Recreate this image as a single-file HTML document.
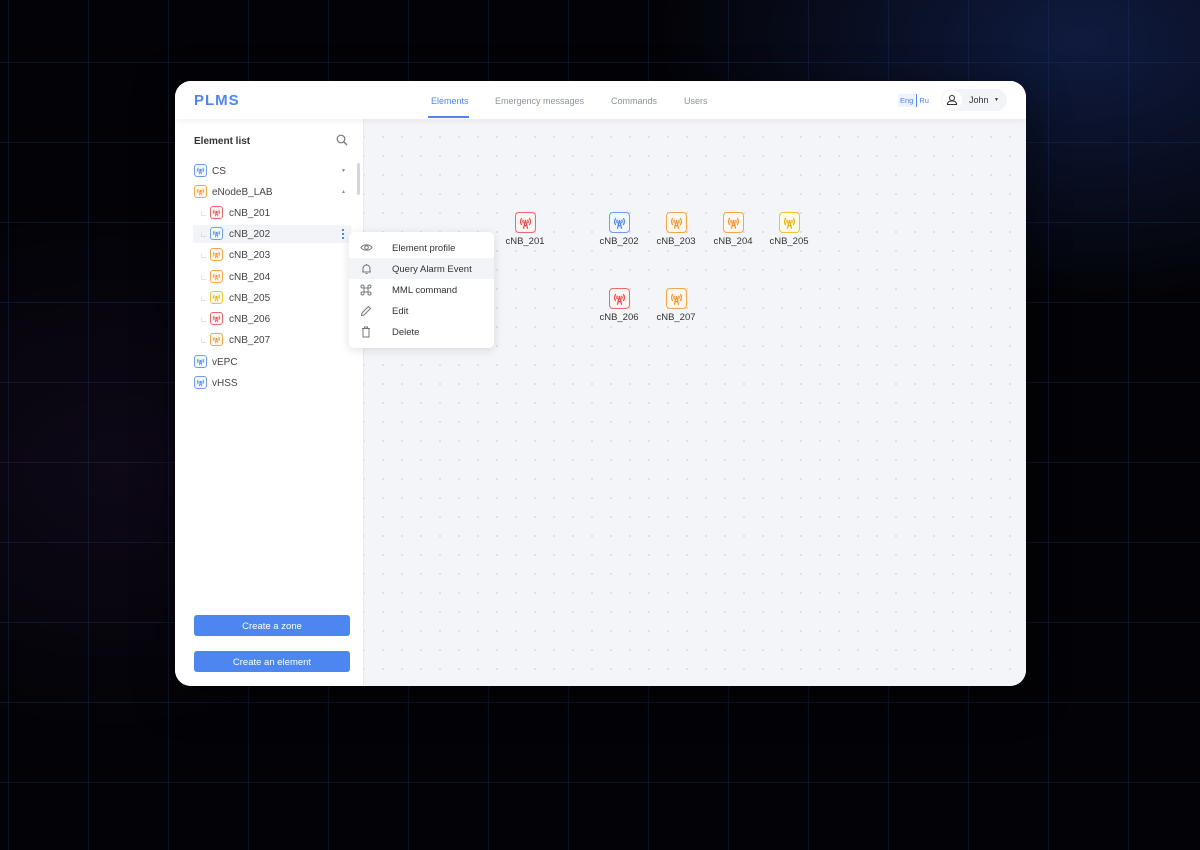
<!DOCTYPE html>
<html><head><meta charset="utf-8"><style>
*{box-sizing:border-box;margin:0;padding:0}
body{width:1200px;height:850px;overflow:hidden;font-family:"Liberation Sans",sans-serif;background:#030307;position:relative}
.bg{position:absolute;inset:0;background:
radial-gradient(ellipse 420px 260px at 1080px 40px,rgba(30,55,130,.45),transparent),
radial-gradient(ellipse 350px 260px at 120px 470px,rgba(40,20,60,.3),transparent);}
.grid{position:absolute;inset:0;background-image:linear-gradient(90deg,rgba(35,60,130,.28) 1px,transparent 1px),linear-gradient(rgba(35,60,130,.28) 1px,transparent 1px);background-size:80px 80px;background-position:8px 62px;}
.win{position:absolute;left:175px;top:81px;width:851px;height:605px;background:#fff;border-radius:16px;overflow:hidden;box-shadow:0 10px 40px rgba(0,0,0,.5)}
.top{position:absolute;left:0;top:0;width:100%;height:38px;background:#fff;box-shadow:0 2px 6px rgba(0,0,0,.06);z-index:3}
.logo{position:absolute;left:19px;top:11px;font-weight:bold;font-size:15px;color:#4d86f0;letter-spacing:1px}
.nav{position:absolute;top:15px;font-size:9px;color:#8d929c}
.nav.a{color:#4d86f0}
.ul{position:absolute;left:253px;top:35px;width:41px;height:2px;background:#4d86f0}
.lang{position:absolute;left:723px;top:13px;font-size:7.5px;color:#4d86f0}
.lang span{display:inline-block;padding:2px 2px;background:#eef3fd}
.user{position:absolute;left:766px;top:8px;width:66px;height:22px;background:#f3f4f7;border-radius:11px;font-size:9px;color:#333}
.user .c{position:absolute;left:1px;top:1px;width:20px;height:20px;border-radius:10px;background:#fff}
.side{position:absolute;left:0;top:38px;width:189px;height:567px;background:#fff;border-right:1px solid #e8eaee}
.canvas{position:absolute;left:189px;top:38px;right:0;bottom:0;background-color:#f4f5f9;background-image:radial-gradient(circle,#d3d6dd 0.7px,transparent 1.1px);background-size:19px 19px;background-position:9.5px 8.5px}
.h{position:absolute;left:19px;font-size:10px;font-weight:bold;color:#333}
.row{position:absolute;height:18px;font-size:10px;color:#444;line-height:18px}
.ic{position:absolute;width:13px;height:13px;border:1px solid;border-radius:3px}
.ic svg{position:absolute;left:1px;top:1px;width:9px;height:9px}
.b{border-color:#6f9df1;color:#4d86f0;background:#f3f7ff}.o{border-color:#f5a54a;color:#f29330;background:#fff8ef}.r{border-color:#ea6a6a;color:#e24c4c;background:#fff4f4}.y{border-color:#efc230;color:#e3b20c;background:#fffbe9}
.btn{position:absolute;left:19px;width:156px;height:21px;background:#4d86f0;border-radius:3px;color:#fff;font-size:9.5px;text-align:center;line-height:23px}
.menu{position:absolute;left:349px;top:232px;width:145px;height:116px;background:#fff;border-radius:5px;box-shadow:0 2px 10px rgba(0,0,0,.12);z-index:5}
.mi{position:absolute;left:0;width:100%;height:21px;font-size:9.5px;color:#333;line-height:23px}
.mi span{position:absolute;left:43px}
.mi svg{position:absolute;left:11px;top:5px}
.node{position:absolute;text-align:center;font-size:9.5px;color:#333;width:50px;line-height:12px}
.node .ic{position:relative;display:block;margin:0 auto 3px;width:21px;height:21px;border-radius:4px;left:0}
.node .ic svg{left:2px;top:2px;width:15px;height:15px}
</style></head><body>
<svg width="0" height="0" style="position:absolute"><defs><symbol id="ant" viewBox="0 0 12 12"><path d="M3 2.5a4.5 4.5 0 0 0 0 5.5M9 2.5a4.5 4.5 0 0 1 0 5.5M4.4 3.8a2.3 2.3 0 0 0 0 2.8M7.6 3.8a2.3 2.3 0 0 1 0 2.8M6 4L4.3 11M6 4L7.7 11M4.9 8.5h2.2" fill="none" stroke="currentColor" stroke-width="1"/></symbol></defs></svg>
<div class="bg"></div><div class="grid"></div>
<div class="win">
 <div class="top">
  <div class="logo">PLMS</div>
  <div class="nav a" style="left:256px">Elements</div>
  <div class="nav" style="left:320px">Emergency messages</div>
  <div class="nav" style="left:436px">Commands</div>
  <div class="nav" style="left:509px">Users</div>
  <div class="ul"></div>
  <div class="lang"><span>Eng</span><span style="background:none;border-left:1px solid #4d86f0;margin-left:1px">Ru</span></div>
  <div class="user"><div class="c"><svg width="20" height="20" viewBox="0 0 20 20"><circle cx="10" cy="8" r="2.5" fill="none" stroke="#333" stroke-width="1.1"/><path d="M5.5 14.5h9c0-2.5-2-3.5-4.5-3.5s-4.5 1-4.5 3.5z" fill="none" stroke="#333" stroke-width="1.1"/></svg></div><span style="position:absolute;left:28px;top:6px">John</span><span style="position:absolute;left:53px;top:8px;font-size:5px">▼</span></div>
 </div>
 <div class="side">
  <div class="h" style="top:17px">Element list</div>
  <svg style="position:absolute;left:161px;top:15px" width="12" height="12" viewBox="0 0 12 12"><circle cx="5" cy="5" r="3.8" fill="none" stroke="#777" stroke-width="1.2"/><path d="M8 8l3 3" stroke="#777" stroke-width="1.3"/></svg>
  <div style="position:absolute;left:182px;top:44px;width:3px;height:32px;background:#d4d6db;border-radius:2px"></div>
 </div>
 <div class="canvas"></div>
</div>
<div class="row" style="left:193px;top:163px"><div class="ic b" style="left:1px;top:1px"><svg><use href="#ant"/></svg></div><span style="position:absolute;left:19px">CS</span></div>
<div style="position:absolute;left:341px;top:168px;font-size:5px;color:#888">▼</div>
<div class="row" style="left:193px;top:184px"><div class="ic o" style="left:1px;top:1px"><svg><use href="#ant"/></svg></div><span style="position:absolute;left:19px;white-space:nowrap">eNodeB_LAB</span></div>
<div style="position:absolute;left:341px;top:189px;font-size:5px;color:#888">▲</div>
<div style="position:absolute;left:193px;top:225px;width:158px;height:18px;background:#f3f4f8;border-radius:3px"></div>
<div style="position:absolute;left:342px;top:229px;width:2px;height:10px;border-left:2px dotted #4d86f0"></div>
<div class="row" style="left:200px;top:205px"><span style="color:#bbb;font-size:8px">∟</span><div class="ic r" style="left:10px;top:1px"><svg><use href="#ant"/></svg></div><span style="position:absolute;left:29px;white-space:nowrap">cNB_201</span></div>
<div class="row" style="left:200px;top:226px"><span style="color:#bbb;font-size:8px">∟</span><div class="ic b" style="left:10px;top:1px"><svg><use href="#ant"/></svg></div><span style="position:absolute;left:29px;white-space:nowrap">cNB_202</span></div>
<div class="row" style="left:200px;top:247px"><span style="color:#bbb;font-size:8px">∟</span><div class="ic o" style="left:10px;top:1px"><svg><use href="#ant"/></svg></div><span style="position:absolute;left:29px;white-space:nowrap">cNB_203</span></div>
<div class="row" style="left:200px;top:269px"><span style="color:#bbb;font-size:8px">∟</span><div class="ic o" style="left:10px;top:1px"><svg><use href="#ant"/></svg></div><span style="position:absolute;left:29px;white-space:nowrap">cNB_204</span></div>
<div class="row" style="left:200px;top:290px"><span style="color:#bbb;font-size:8px">∟</span><div class="ic y" style="left:10px;top:1px"><svg><use href="#ant"/></svg></div><span style="position:absolute;left:29px;white-space:nowrap">cNB_205</span></div>
<div class="row" style="left:200px;top:311px"><span style="color:#bbb;font-size:8px">∟</span><div class="ic r" style="left:10px;top:1px"><svg><use href="#ant"/></svg></div><span style="position:absolute;left:29px;white-space:nowrap">cNB_206</span></div>
<div class="row" style="left:200px;top:332px"><span style="color:#bbb;font-size:8px">∟</span><div class="ic o" style="left:10px;top:1px"><svg><use href="#ant"/></svg></div><span style="position:absolute;left:29px;white-space:nowrap">cNB_207</span></div>
<div class="row" style="left:193px;top:354px"><div class="ic b" style="left:1px;top:1px"><svg><use href="#ant"/></svg></div><span style="position:absolute;left:19px">vEPC</span></div>
<div class="row" style="left:193px;top:375px"><div class="ic b" style="left:1px;top:1px"><svg><use href="#ant"/></svg></div><span style="position:absolute;left:19px">vHSS</span></div>
<div class="btn" style="left:194px;top:615px">Create a zone</div>
<div class="btn" style="left:194px;top:651px">Create an element</div>
<div class="menu">
 <div class="mi" style="top:5px"><svg width="13" height="11" viewBox="0 0 13 11"><path d="M1 5.5C3 2 10 2 12 5.5C10 9 3 9 1 5.5z" fill="none" stroke="#777" stroke-width="1"/><circle cx="6.5" cy="5.5" r="1.8" fill="none" stroke="#777"/></svg><span>Element profile</span></div>
 <div class="mi" style="top:26px;background:#f3f4f8"><svg width="13" height="12" viewBox="0 0 13 12"><path d="M3 9V5.5a3.5 3.5 0 0 1 7 0V9M2 9h9M5.5 10.5h2M6.5 1v1" fill="none" stroke="#777" stroke-width="1"/></svg><span>Query Alarm Event</span></div>
 <div class="mi" style="top:47px"><svg width="12" height="12" viewBox="0 0 12 12"><path d="M4 4V2.5A1.5 1.5 0 1 0 2.5 4H9.5A1.5 1.5 0 1 0 8 2.5V9.5A1.5 1.5 0 1 0 9.5 8H2.5A1.5 1.5 0 1 0 4 9.5z" fill="none" stroke="#777" stroke-width="1"/></svg><span>MML command</span></div>
 <div class="mi" style="top:68px"><svg width="12" height="12" viewBox="0 0 12 12"><path d="M1.5 10.5l.5-2.5L8.5 1.5l2 2L4 10z" fill="none" stroke="#777" stroke-width="1"/></svg><span>Edit</span></div>
 <div class="mi" style="top:89px"><svg width="12" height="12" viewBox="0 0 12 12"><path d="M2 2.5h8M4.5 2.5V1h3v1.5M3 2.5v8.5h6V2.5" fill="none" stroke="#777" stroke-width="1"/></svg><span>Delete</span></div>
</div>
<div class="node" style="left:500px;top:212px"><div class="ic r"><svg><use href="#ant"/></svg></div>cNB_201</div>
<div class="node" style="left:594px;top:212px"><div class="ic b"><svg><use href="#ant"/></svg></div>cNB_202</div>
<div class="node" style="left:651px;top:212px"><div class="ic o"><svg><use href="#ant"/></svg></div>cNB_203</div>
<div class="node" style="left:708px;top:212px"><div class="ic o"><svg><use href="#ant"/></svg></div>cNB_204</div>
<div class="node" style="left:764px;top:212px"><div class="ic y"><svg><use href="#ant"/></svg></div>cNB_205</div>
<div class="node" style="left:594px;top:288px"><div class="ic r"><svg><use href="#ant"/></svg></div>cNB_206</div>
<div class="node" style="left:651px;top:288px"><div class="ic o"><svg><use href="#ant"/></svg></div>cNB_207</div>
</body></html>
